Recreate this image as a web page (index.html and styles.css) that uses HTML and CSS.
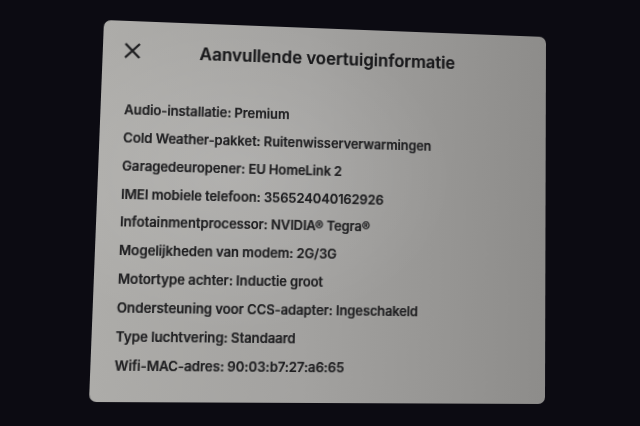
FILE: index.html
```html
<!DOCTYPE html>
<html lang="nl">
<head>
<meta charset="utf-8">
<link rel="stylesheet" href="styles.css">
</head>
<body>
<div class="stage">
  <section class="panel">
    <header class="panel-head">
      <button class="close" aria-label="Sluiten">
        <svg width="16" height="16" viewBox="0 0 16 16"><path d="M1.8 1.8 L14.2 14.2 M14.2 1.8 L1.8 14.2" stroke="#1e1e20" stroke-width="2.3" stroke-linecap="square" fill="none"/></svg>
      </button>
      <h1 class="title">Aanvullende voertuiginformatie</h1>
      <span></span>
    </header>
    <ul class="info">
      <li>Audio-installatie: Premium</li>
      <li>Cold Weather-pakket: Ruitenwisserverwarmingen</li>
      <li>Garagedeuropener: EU HomeLink 2</li>
      <li>IMEI mobiele telefoon: 356524040162926</li>
      <li>Infotainmentprocessor: NVIDIA® Tegra®</li>
      <li>Mogelijkheden van modem: 2G/3G</li>
      <li>Motortype achter: Inductie groot</li>
      <li>Ondersteuning voor CCS-adapter: Ingeschakeld</li>
      <li>Type luchtvering: Standaard</li>
      <li>Wifi-MAC-adres: 90:03:b7:27:a6:65</li>
    </ul>
  </section>
</div>
</body>
</html>
```
FILE: styles.css
```css
html, body {
  margin: 0;
  height: 100%;
  background: #0c0b12;
  overflow: hidden;
}
.stage {
  padding: 20px 0 0 104px;
}
.panel {
  width: 450px;
  height: 375px;
  box-sizing: border-box;
  padding: 19px 0 0;
  border-radius: 7px;
  background:
    radial-gradient(ellipse 70% 60% at 30% 40%, rgba(255,255,255,0.12), rgba(255,255,255,0) 70%),
    linear-gradient(90deg, #adaca9 0%, #a3a2a0 45%, #8d8c8a 100%);
  transform-origin: 0 0;
  transform: matrix3d(1.022531, 0.039328, 0, 0.0000912, -0.038776, 0.987483, 0, -0.0000816, 0, 0, 1, 0, 0, 0, 0, 1);
  font-family: Inter, "Noto Sans", sans-serif;
  color: #1f1f21;
}
.panel-head {
  display: grid;
  grid-template-columns: 1fr auto 1fr;
  align-items: center;
  height: 24px;
}
.close {
  justify-self: start;
  margin: 0 0 3px 21px;
  padding: 0;
  border: 0;
  background: none;
  width: 16px;
  height: 16px;
  display: flex;
}
.title {
  margin: 0;
  font-size: 17px;
  line-height: 24px;
  font-weight: 600;
  color: #19191b;
  text-shadow: 0 0 0.6px rgba(20,20,22,0.6);
}
.info {
  list-style: none;
  margin: 33px 0 0;
  padding: 0 0 0 23px;
}
.info li {
  font-size: 13px;
  line-height: 27.84px;
  font-weight: 600;
  letter-spacing: -0.12px;
  white-space: nowrap;
  text-shadow: 0 0 0.6px rgba(20,20,22,0.5);
}
```
